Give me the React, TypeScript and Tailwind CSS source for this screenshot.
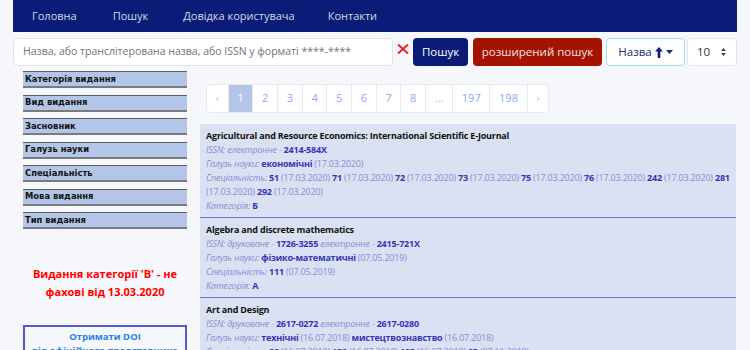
import { Fragment } from "react";

type Part = { t: string; k: "label" | "value" | "date" | "plain" };

type Entry = {
  title: string;
  lines: Part[][];
};

const entries: Entry[] = [
  {
    title: "Agricultural and Resource Economics: International Scientific E-Journal",
    lines: [
      [
        { t: "ISSN: електронне - ", k: "label" },
        { t: "2414-584X", k: "value" },
      ],
      [
        { t: "Галузь науки: ", k: "label" },
        { t: "економічні", k: "value" },
        { t: " (17.03.2020)", k: "date" },
      ],
      [
        { t: "Спеціальність: ", k: "label" },
        { t: "51", k: "value" },
        { t: " (17.03.2020) ", k: "date" },
        { t: "71", k: "value" },
        { t: " (17.03.2020) ", k: "date" },
        { t: "72", k: "value" },
        { t: " (17.03.2020) ", k: "date" },
        { t: "73", k: "value" },
        { t: " (17.03.2020) ", k: "date" },
        { t: "75", k: "value" },
        { t: " (17.03.2020) ", k: "date" },
        { t: "76", k: "value" },
        { t: " (17.03.2020) ", k: "date" },
        { t: "242", k: "value" },
        { t: " (17.03.2020) ", k: "date" },
        { t: "281", k: "value" },
        { t: " (17.03.2020) ", k: "date" },
        { t: "292", k: "value" },
        { t: " (17.03.2020)", k: "date" },
      ],
      [
        { t: "Категорія: ", k: "label" },
        { t: "Б", k: "value" },
      ],
    ],
  },
  {
    title: "Algebra and discrete mathematics",
    lines: [
      [
        { t: "ISSN: друковане - ", k: "label" },
        { t: "1726-3255", k: "value" },
        { t: " електронне - ", k: "label" },
        { t: "2415-721X", k: "value" },
      ],
      [
        { t: "Галузь науки: ", k: "label" },
        { t: "фізико-математичні", k: "value" },
        { t: " (07.05.2019)", k: "date" },
      ],
      [
        { t: "Спеціальність: ", k: "label" },
        { t: "111", k: "value" },
        { t: " (07.05.2019)", k: "date" },
      ],
      [
        { t: "Категорія: ", k: "label" },
        { t: "А", k: "value" },
      ],
    ],
  },
  {
    title: "Art and Design",
    lines: [
      [
        { t: "ISSN: друковане - ", k: "label" },
        { t: "2617-0272", k: "value" },
        { t: " електронне - ", k: "label" },
        { t: "2617-0280", k: "value" },
      ],
      [
        { t: "Галузь науки: ", k: "label" },
        { t: "технічні", k: "value" },
        { t: " (16.07.2018) ", k: "date" },
        { t: "мистецтвознавство", k: "value" },
        { t: " (16.07.2018)", k: "date" },
      ],
      [
        { t: "Спеціальність: ", k: "label" },
        { t: "22", k: "value" },
        { t: " (16.07.2018) ", k: "date" },
        { t: "132", k: "value" },
        { t: " (16.07.2018) ", k: "date" },
        { t: "183", k: "value" },
        { t: " (16.07.2018) ", k: "date" },
        { t: "23", k: "value" },
        { t: " (07.11.2018)", k: "date" },
      ],
      [
        { t: "Категорія: ", k: "label" },
        { t: "Б", k: "value" },
      ],
    ],
  },
];

const filters = [
  "Категорія видання",
  "Вид видання",
  "Засновник",
  "Галузь науки",
  "Спеціальність",
  "Мова видання",
  "Тип видання",
];

const pages = ["‹", "1", "2", "3", "4", "5", "6", "7", "8", "...", "197", "198", "›"];

function PartSpan({ p }: { p: Part }) {
  if (p.k === "label") return <span className="italic text-[#8b8bd6]">{p.t}</span>;
  if (p.k === "value") return <span className="font-bold text-[#3535b5]">{p.t}</span>;
  return <span className="text-[#8b8bd6]">{p.t}</span>;
}

export default function App() {
  return (
    <div className="h-[350px] bg-[#f6f7fa] font-['Open_Sans',sans-serif] overflow-hidden">
      {/* top nav */}
      <nav className="mx-[13px] h-[32px] bg-[#0a1c78] flex items-center text-[11px] text-[#d5d9e6]">
        <span className="ml-[19px]">Головна</span>
        <span className="ml-[36px]">Пошук</span>
        <span className="ml-[35px]">Довідка користувача</span>
        <span className="ml-[33px]">Контакти</span>
      </nav>

      {/* search row */}
      <div className="mx-[13px] mt-[6px] h-[28px] flex items-stretch">
        <div className="w-[380px] bg-white border border-[#dfe3ea] rounded-[4px] flex items-center pl-[9px] text-[10.5px] text-[#6c757d]">
          Назва, або транслітерована назва, або ISSN у форматі ****-****
        </div>
        <svg className="ml-[4px] mt-[6px]" width="12" height="10" viewBox="0 0 12 10">
          <path d="M1 0.5 L11 9.5 M11 0.5 L1 9.5" stroke="#e8262a" strokeWidth="2" />
        </svg>
        <button className="ml-[4px] w-[55px] bg-[#0a1c78] text-white text-[11.5px] rounded-[4px]">Пошук</button>
        <button className="ml-[5px] w-[129px] bg-[#a31300] text-[#f1e3e0] text-[11.5px] rounded-[4px]">
          розширений пошук
        </button>
        <div className="ml-[4px] w-[79px] bg-white border border-[#a6dbe6] rounded-[4px] flex items-center justify-center gap-[3px] text-[11.5px] text-[#15306e]">
          <span>Назва</span>
          <svg width="8" height="11" viewBox="0 0 8 11">
            <path d="M4 0 L8 4.5 L5.3 4.5 L5.3 11 L2.7 11 L2.7 4.5 L0 4.5 Z" fill="#0a1c78" />
          </svg>
          <svg width="7" height="4" viewBox="0 0 7 4">
            <path d="M0 0 L7 0 L3.5 4 Z" fill="#15306e" />
          </svg>
        </div>
        <div className="ml-[2px] flex-1 bg-white border border-[#e3e6ec] rounded-[4px] flex items-center justify-between pl-[9px] pr-[10px] text-[11.5px] text-[#333]">
          <span>10</span>
          <svg width="5" height="8" viewBox="0 0 5 8">
            <path d="M0 3 L2.5 0 L5 3 Z M0 5 L2.5 8 L5 5 Z" fill="#444" />
          </svg>
        </div>
      </div>

      <div className="flex mt-[5px]">
        {/* sidebar */}
        <aside className="ml-[23px] w-[164px] shrink-0 flex flex-col">
          <div className="flex flex-col gap-[6.5px]">
            {filters.map((f) => (
              <div
                key={f}
                className="h-[17px] bg-[#b4c6e7] border-t border-t-[#5f5f66] border-b-2 border-b-[#7a7a80] pl-[2px] flex items-center font-['DejaVu_Sans',sans-serif] font-bold text-[8.4px] text-[#111]"
              >
                {f}
              </div>
            ))}
          </div>
          <p className="mt-[36px] text-center font-bold text-[11px] leading-[18px] text-[#ff0000]">
            Видання категорії 'В' - не
            <br />
            фахові від 13.03.2020
          </p>
          <div className="mt-[24px] border-2 border-[#5555cc] h-[40px] text-center font-bold text-[9.5px] leading-[14px] text-[#2a80e6] pt-[3px]">
            Отримати DOI
            <br />
            від офіційного представника
          </div>
        </aside>

        {/* main */}
        <main className="ml-[13px] w-[536px] shrink-0 pt-[13px]">
          <div className="ml-[6px] inline-flex h-[29px] bg-white border border-[#e6e9ef] rounded-[4px] text-[11px] text-[#8aa9ee]">
            {pages.map((p, i) => (
              <Fragment key={i}>
                <span
                  className={
                    "flex items-center justify-center px-[8.7px] " +
                    (i > 0 ? "border-l border-[#e6e9ef] " : "") +
                    (p === "1"
                      ? "bg-[#b4c6e7] text-white"
                      : p === "‹" || p === "›" || p === "..."
                        ? "text-[#b8bcc6]"
                        : "")
                  }
                >
                  {p}
                </span>
              </Fragment>
            ))}
          </div>

          <div className="mt-[11px] bg-[#d9e1f2] text-[9px] tracking-[-0.2px] leading-[14px]">
            {entries.map((e, i) => (
              <div key={i} className={"px-[6px] pt-[5px] pb-[4px] " + (i > 0 ? "border-t border-[#6f6fe0]" : "")}>
                <div className="font-bold text-[#111]">{e.title}</div>
                {e.lines.map((l, j) => (
                  <div key={j}>
                    {l.map((p, k) => (
                      <PartSpan key={k} p={p} />
                    ))}
                  </div>
                ))}
              </div>
            ))}
          </div>
        </main>
      </div>
    </div>
  );
}
